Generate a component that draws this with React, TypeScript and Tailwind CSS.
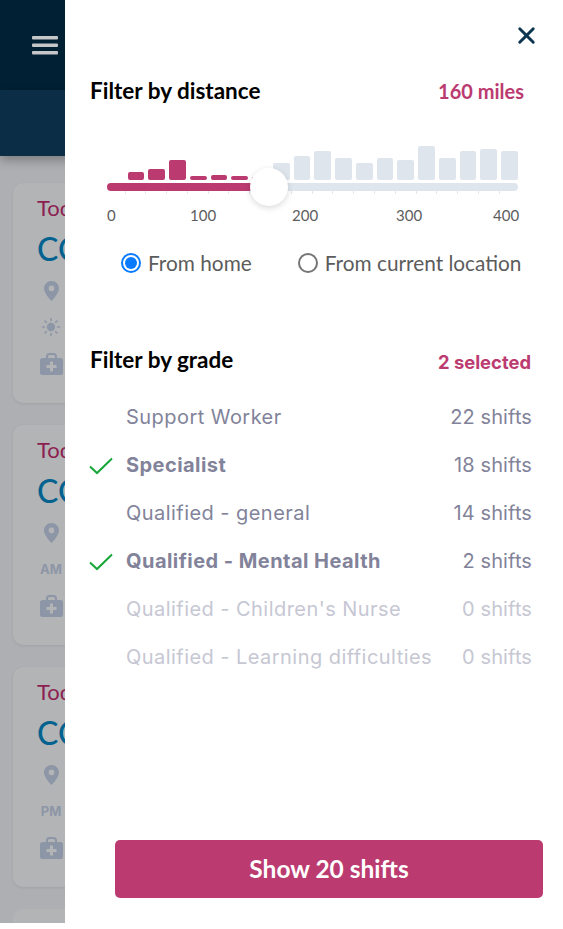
import { X, Sun } from "lucide-react";

const heights = [8, 11, 20, 4, 5, 4, 3, 17, 24, 29, 22, 17, 22, 20, 34, 22, 29, 31, 29];
const ticks = Array.from({ length: 19 });

const grades = [
  { name: "Support Worker", shifts: "22 shifts" },
  { name: "Specialist", shifts: "18 shifts", checked: true },
  { name: "Qualified - general", shifts: "14 shifts" },
  { name: "Qualified - Mental Health", shifts: "2 shifts", checked: true },
  { name: "Qualified - Children's Nurse", shifts: "0 shifts", off: true },
  { name: "Qualified - Learning difficulties", shifts: "0 shifts", off: true },
];

const cards = [{ icon: "sun" }, { icon: "AM" }, { icon: "PM" }];

function Check() {
  return (
    <svg width="24" height="18" viewBox="0 0 24 18" fill="none" className="absolute left-[-37px] top-[16px]">
      <path d="M1 9.5 L8 16 L23 1.5" stroke="#16a738" strokeWidth="2" />
    </svg>
  );
}

function Pin() {
  return (
    <svg width="15" height="20" viewBox="0 0 15 20">
      <path
        fillRule="evenodd"
        d="M7.5 0C3.4 0 0 3.3 0 7.4 0 12.5 7.5 20 7.5 20S15 12.5 15 7.4C15 3.3 11.6 0 7.5 0Zm0 4.6a2.8 2.8 0 1 1 0 5.6 2.8 2.8 0 0 1 0-5.6Z"
        fill="#8d96a6"
      />
    </svg>
  );
}

function MedCase() {
  return (
    <svg width="23" height="22" viewBox="0 0 23 22">
      <path d="M7 6V3.5C7 2 8 1 9.5 1h4C15 1 16 2 16 3.5V6" fill="none" stroke="#8d96a6" strokeWidth="2" />
      <rect x="0" y="5" width="23" height="17" rx="2.5" fill="#8d96a6" />
      <path d="M10 8.5h3v3.5h3.5v3H13v3.5h-3V15H6.500v-3H10Z" fill="#b3b4b6" />
    </svg>
  );
}

export default function App() {
  return (
    <div className="relative h-[929px] w-[563px] overflow-hidden bg-white font-['Lato',sans-serif]">
      {/* page behind the drawer */}
      <div className="h-[923px] overflow-hidden bg-[#adafb2]">
        <div className="flex h-[90px] items-center bg-[#012033] pl-[32px]">
          <svg width="26" height="19" viewBox="0 0 26 19">
            <rect y="0" width="26" height="3.500" rx="1" fill="#c4c6c8" />
            <rect y="7.500" width="26" height="3.500" rx="1" fill="#c4c6c8" />
            <rect y="15" width="26" height="3.500" rx="1" fill="#c4c6c8" />
          </svg>
        </div>
        <div className="h-[66px] bg-[#0b2e46] shadow-[0_4px_10px_rgba(0,0,0,0.3)]" />
        <div className="flex flex-col gap-[22px] pl-[13px] pt-[27px]">
          {cards.map((c) => (
            <div key={c.icon} className="h-[220px] w-[300px] shrink-0 rounded-[10px] bg-[#b3b4b6] pl-[24px] pt-[13px] shadow-[0_1px_3px_rgba(0,0,0,0.08)]">
              <p className="text-[22px] leading-[24px] text-[#8c1f50]">Today</p>
              <p className="mt-[11px] text-[32px] font-medium leading-[36px] text-[#04628f]">COVID</p>
              <div className="mt-[14px] flex w-[28px] flex-col items-center gap-[16px] text-[#8d96a6]">
                <Pin />
                {c.icon === "sun" ? (
                  <Sun size={20} fill="#8d96a6" />
                ) : (
                  <span className="font-['Inter',sans-serif] text-[13px] font-bold leading-[20px]">{c.icon}</span>
                )}
                <MedCase />
              </div>
            </div>
          ))}
          <div className="h-[220px] w-[300px] shrink-0 rounded-[10px] bg-[#b3b4b6]" />
        </div>
      </div>

      {/* filter drawer */}
      <div className="absolute bottom-[6px] left-[65px] right-0 top-0 flex flex-col bg-white pl-[25px]">
        <div className="flex justify-end pr-[23px] pt-[22px]">
          <X size={27} strokeWidth={2.6} className="text-[#0d3550]" />
        </div>
        <div className="mt-[29px] flex items-center justify-between pr-[39px]">
          <h2 className="text-[22.500px] font-bold leading-[26px] text-black">Filter by distance</h2>
          <span className="text-[20px] font-bold leading-[26px] text-[#bb3b70]">160 miles</span>
        </div>

        {/* histogram slider */}
        <div className="relative ml-[17px] mt-[42px] w-[411px]">
          <div className="flex h-[34px] items-end gap-[3.800px] pl-[20.500px]">
            {heights.map((h, i) => (
              <div
                key={i}
                className={`w-[17px] rounded-[2px] ${i < 7 ? "bg-[#bb3b70]" : "bg-[#dfe5ed]"}`}
                style={{ height: h }}
              />
            ))}
          </div>
          <div className="mt-[3px] h-[8px] rounded-full bg-[#dfe5ed]">
            <div className="h-full w-[162px] rounded-l-full bg-[#bb3b70]" />
          </div>
          <div className="flex gap-[19.800px] pl-[17.500px]">
            {ticks.map((_, i) => (
              <div key={i} className="h-[3px] w-px bg-[#e3e6ea]" />
            ))}
          </div>
          <div className="absolute left-[143px] top-[22px] h-[38px] w-[38px] rounded-full bg-white shadow-[0_2px_6px_rgba(0,0,0,0.15)]" />
          <div className="mt-[12px] flex text-[15px] leading-[18px] text-[#5d5d5d]">
            <span className="w-[9px]">0</span>
            <span className="ml-[74px] w-[25px]">100</span>
            <span className="ml-[77px] w-[25px]">200</span>
            <span className="ml-[79px] w-[25px]">300</span>
            <span className="ml-[72px] w-[25px]">400</span>
          </div>
        </div>

        <div className="mt-[26px] flex items-center pl-[31px] text-[20.800px] leading-[26px] text-[#5c5c5c]">
          <span className="flex h-[20px] w-[20px] items-center justify-center rounded-full border-2 border-[#0a7bff]">
            <span className="h-[12px] w-[12px] rounded-full bg-[#0a7bff]" />
          </span>
          <span className="ml-[7px]">From home</span>
          <span className="ml-[46px] h-[20px] w-[20px] rounded-full border-2 border-[#757575]" />
          <span className="ml-[7px]">From current location</span>
        </div>

        <div className="mt-[71px] flex items-center justify-between pr-[32px]">
          <h2 className="text-[22.500px] font-bold leading-[26px] text-black">Filter by grade</h2>
          <span className="relative top-[2px] font-['Inter',sans-serif] text-[18.400px] font-bold leading-[26px] text-[#bb3b70]">2 selected</span>
        </div>

        <ul className="mt-[20px] pl-[36px] pr-[31px] font-['Inter',sans-serif] text-[20px] leading-[48px]">
          {grades.map((g) => (
            <li
              key={g.name}
              className={`relative flex h-[48px] justify-between ${g.off ? "text-[#c6c7d3]" : "text-[#82839a]"}`}
            >
              {g.checked && <Check />}
              <span className={`tracking-[0.45px] ${g.checked ? "font-bold" : ""}`}>{g.name}</span>
              <span className="tracking-[0.1px]">{g.shifts}</span>
            </li>
          ))}
        </ul>

        <div className="mt-auto pb-[25px] pl-[25px] pr-[20px]">
          <button className="h-[58px] w-full rounded-[5px] bg-[#bb3b70] text-[24.500px] font-bold text-white">
            Show 20 shifts
          </button>
        </div>
      </div>
    </div>
  );
}
